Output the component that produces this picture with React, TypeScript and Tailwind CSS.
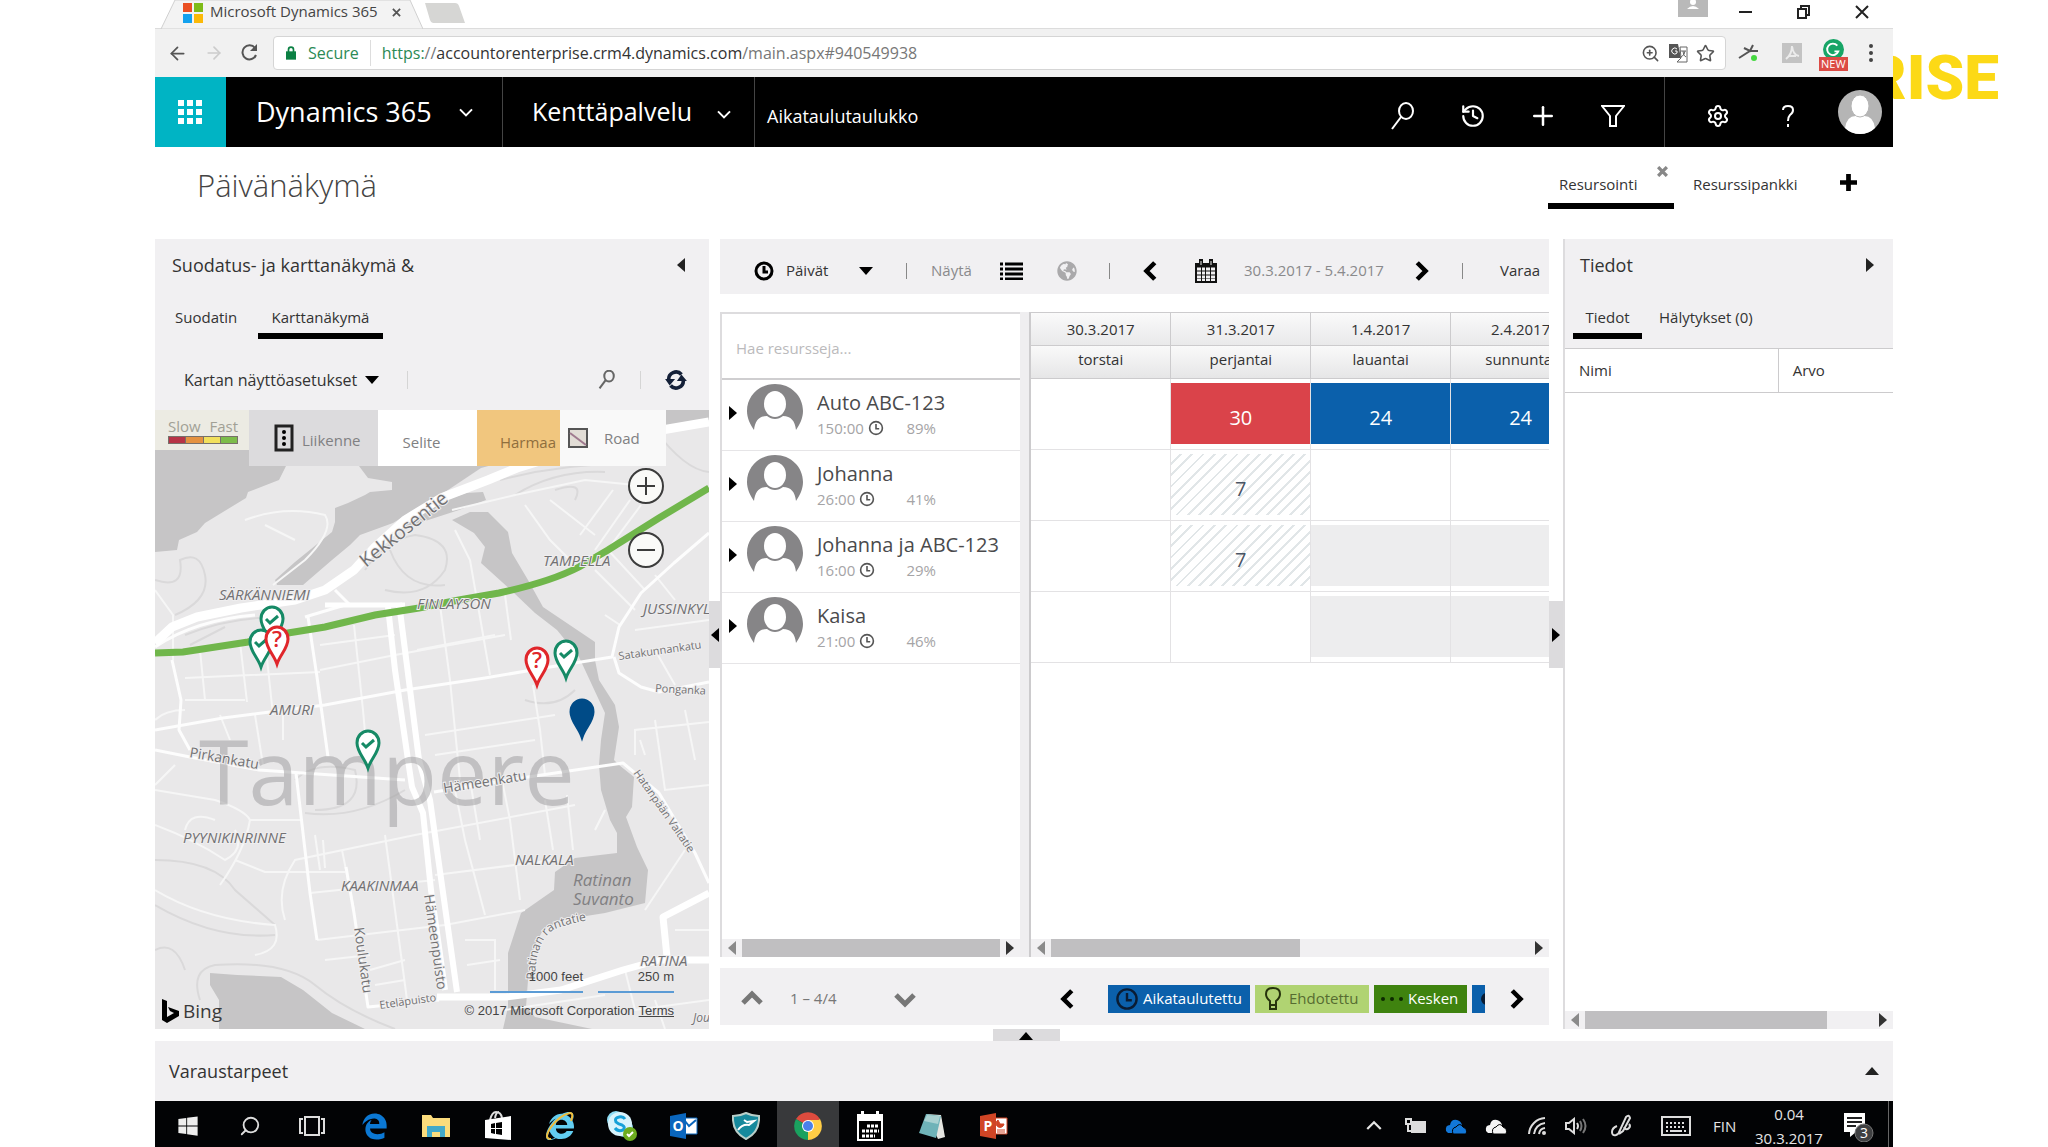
import React from 'react';
import { ArrowLeft, ArrowRight, History, Plus, Search, Settings, Star, ZoomIn } from 'lucide-react';
import { FaEdgeLegacy, FaGlobeAmericas, FaInternetExplorer, FaWindows } from 'react-icons/fa';

type IconProps = { className?: string };
type Direction = 'left' | 'right' | 'up' | 'down';

const resources = [
  { name: 'Auto ABC-123', hours: '150:00', load: '89%' },
  { name: 'Johanna', hours: '26:00', load: '41%' },
  { name: 'Johanna ja ABC-123', hours: '16:00', load: '29%' },
  { name: 'Kaisa', hours: '21:00', load: '46%' },
];

const days = [
  { date: '30.3.2017', name: 'torstai' },
  { date: '31.3.2017', name: 'perjantai' },
  { date: '1.4.2017', name: 'lauantai' },
  { date: '2.4.2017', name: 'sunnuntai' },
];

const cellStyles: Record<string, string> = {
  none: '',
  over: 'bg-[#da434a] text-white',
  full: 'bg-[#0b60ab] text-white',
  part: 'text-gray-600 bg-[repeating-linear-gradient(135deg,#ffffff_0px,#ffffff_6px,#e1e6e8_6px,#e1e6e8_8px)]',
  off: 'bg-[#ededee]',
};

const schedule = [
  [{ kind: 'none', value: '' }, { kind: 'over', value: '30' }, { kind: 'full', value: '24' }, { kind: 'full', value: '24' }],
  [{ kind: 'none', value: '' }, { kind: 'part', value: '7' }, { kind: 'none', value: '' }, { kind: 'none', value: '' }],
  [{ kind: 'none', value: '' }, { kind: 'part', value: '7' }, { kind: 'off', value: '' }, { kind: 'off', value: '' }],
  [{ kind: 'none', value: '' }, { kind: 'none', value: '' }, { kind: 'off', value: '' }, { kind: 'off', value: '' }],
];

const Triangle = ({ dir, className = '' }: IconProps & { dir: Direction }) => {
  const points = {
    left: '9,0 9,14 1,7',
    right: '1,0 1,14 9,7',
    up: '0,9 14,9 7,1',
    down: '0,1 14,1 7,9',
  };
  const wide = dir === 'up' || dir === 'down';
  return (
    <svg
      viewBox={wide ? '0 0 14 10' : '0 0 10 14'}
      className={`${wide ? 'w-[14px] h-[10px]' : 'w-[10px] h-[14px]'} shrink-0 ${className}`}
      fill="currentColor"
    >
      <polygon points={points[dir]} />
    </svg>
  );
};

const Chevron = ({ dir, className = '', width = 5 }: IconProps & { dir: Direction; width?: number }) => {
  const d = {
    left: 'M15 3 L6 12 L15 21',
    right: 'M9 3 L18 12 L9 21',
    up: 'M3 16 L12 7 L21 16',
    down: 'M3 8 L12 17 L21 8',
  };
  return (
    <svg viewBox="0 0 24 24" className={`shrink-0 ${className}`} fill="none" stroke="currentColor" strokeWidth={width}>
      <path d={d[dir]} />
    </svg>
  );
};

const Magnifier = ({ className = '', width = 2 }: IconProps & { width?: number }) => (
  <svg viewBox="0 0 24 28" className={`shrink-0 ${className}`} fill="none" stroke="currentColor" strokeWidth={width}>
    <ellipse cx="15" cy="9" rx="7" ry="8" />
    <path d="M10 15 L1 27" />
  </svg>
);

const ClockIcon = ({ className = '', width = 2 }: IconProps & { width?: number }) => (
  <svg viewBox="0 0 20 20" className={`shrink-0 ${className}`} fill="none" stroke="currentColor" strokeWidth={width}>
    <circle cx="10" cy="10" r="8" />
    <path d="M10 5 V11 H14" />
  </svg>
);

const PersonIcon = ({ className = '' }: IconProps) => (
  <svg viewBox="0 0 56 46" className={`shrink-0 ${className}`}>
    <path
      d="M28 0 C12 0 0 12 0 27 C0 34 3 40 7 46 C8 37 12 32 20 32 C25 36 31 36 36 32 C44 32 48 37 49 46 C53 40 56 34 56 27 C56 12 44 0 28 0 Z"
      fill="#868587"
    />
    <ellipse cx="28" cy="20" rx="11" ry="13" fill="#fff" />
  </svg>
);

const CalendarIcon = ({ className = '' }: IconProps) => (
  <svg viewBox="0 0 22 24" className={`shrink-0 ${className}`}>
    <path d="M0 4 H22 V24 H0 Z" fill="#111" />
    <path d="M4 0 H8 V7 H4 Z M14 0 H18 V7 H14 Z" fill="#111" />
    <path d="M6 2 V6 M16 2 V6" stroke="#eee" strokeWidth="1" />
    {[10, 14, 18, 21].map((y, i) => (
      <path key={y} d={`M2 ${y} h4 m1 0 h3 m1 0 h4 m1 0 h4`} stroke="#f1f0f2" strokeWidth={i === 3 ? 2 : 3} />
    ))}
  </svg>
);

const BrowserChrome = () => (
  <div>
    <div className="h-[29px] flex items-start border-b border-[#dcdcdc]">
      <div className="relative w-[268px] h-[29px] flex items-center pl-7 pb-1">
        <svg viewBox="0 0 268 30" preserveAspectRatio="none" className="absolute inset-0 w-full h-full">
          <path d="M6 30 L20 0 H255 L268 30 Z" fill="#f3f3f3" stroke="#cfcfcf" />
        </svg>
        <svg viewBox="0 0 20 20" className="relative w-5 h-5">
          <path d="M0 0 H9 V9 H0 Z" fill="#ea4f22" />
          <path d="M11 0 H20 V9 H11 Z" fill="#7ebb18" />
          <path d="M0 11 H9 V20 H0 Z" fill="#13a1ee" />
          <path d="M11 11 H20 V20 H11 Z" fill="#fbb908" />
        </svg>
        <span className="relative ml-[7px] pb-1 text-[15px] leading-5 text-[#444] whitespace-nowrap">Microsoft Dynamics 365</span>
        <button aria-label="Close tab" className="relative ml-auto mr-[22px] text-[#555]">
          <svg viewBox="0 0 10 10" className="w-[9px] h-[9px]" stroke="currentColor" strokeWidth="2">
            <path d="M1 1 L9 9 M9 1 L1 9" />
          </svg>
        </button>
      </div>
      <button aria-label="New tab" className="mt-[3px]">
        <svg viewBox="0 0 42 20" className="w-[42px] h-5">
          <path d="M2 0 H32 Q35 0 36 3 L42 20 H10 Q8 20 7 17 Z" fill="#d6d6d4" />
        </svg>
      </button>
      <div className="ml-auto flex items-start text-[#222]">
        <svg viewBox="0 0 30 17" className="w-[30px] h-[17px] mr-[31px]">
          <path d="M0 0 H30 V17 H0 Z" fill="#b9b9b9" />
          <circle cx="15" cy="2" r="3" fill="#fff" />
          <path d="M9 9 Q15 3 21 9 Z" fill="#fff" />
        </svg>
        <button aria-label="Minimize" className="w-[58px] h-6 flex items-center">
          <svg viewBox="0 0 14 14" className="w-[14px]" stroke="currentColor" strokeWidth="2"><path d="M0 7 H13" /></svg>
        </button>
        <button aria-label="Restore" className="w-[58px] h-6 flex items-center">
          <svg viewBox="0 0 14 14" className="w-[14px]" fill="none" stroke="currentColor" strokeWidth="2">
            <path d="M1 4 H9 V13 H1 Z M4 4 V1 H12 V10 H9" />
          </svg>
        </button>
        <button aria-label="Close" className="w-[38px] h-6 flex items-center">
          <svg viewBox="0 0 14 14" className="w-[14px]" stroke="currentColor" strokeWidth="2"><path d="M1 1 L13 13 M13 1 L1 13" /></svg>
        </button>
      </div>
    </div>
    <div className="h-12 bg-[#f1f1f1] flex items-center pl-3">
      <button aria-label="Back"><ArrowLeft className="w-[21px] h-[21px] text-[#555]" /></button>
      <button aria-label="Forward" className="ml-4"><ArrowRight className="w-5 h-5 text-[#ccc]" /></button>
      <button aria-label="Reload" className="ml-[15px]">
        <svg viewBox="0 0 20 20" className="w-5 h-5 text-[#555]" fill="none" stroke="currentColor" strokeWidth="2">
          <path d="M16 5 A7 7 0 1 0 17 12" />
          <path d="M18 1 V8 H11 Z" fill="currentColor" stroke="none" />
        </svg>
      </button>
      <div className="ml-[14px] flex-1 h-[34px] bg-white border border-[#d5d5d5] rounded-sm flex items-center pl-3 pr-[10px] text-[#555]">
        <svg viewBox="0 0 12 16" className="w-[10px] h-[14px]">
          <path d="M3 7 V4 A3 3 0 0 1 9 4 V7" fill="none" stroke="#0b8043" strokeWidth="2" />
          <path d="M0 6 H12 V16 H0 Z" fill="#0b8043" />
        </svg>
        <span className="ml-3 text-base leading-5 text-[#2b8a55]">Secure</span>
        <span className="mx-[11px] w-px h-[26px] bg-[#ddd]" />
        <div className="text-base leading-5 whitespace-nowrap text-[#777]">
          <span className="text-[#2b8a55]">https:</span>//<span className="text-[#333]">accountorenterprise.crm4.dynamics.com</span>/main.aspx#940549938
        </div>
        <div className="ml-auto flex items-center gap-2">
          <ZoomIn className="w-[19px] h-[19px]" />
          <svg viewBox="0 0 20 20" className="w-5 h-5">
            <path d="M1 1 H10 L13 15 H1 Z" fill="#555" />
            <path d="M12 4 H19 V19 H9 L13 15 Z" fill="#fff" stroke="#666" />
            <path d="M9 6 A3 3 0 1 0 9 10 V8 H7" fill="none" stroke="#fff" strokeWidth="1" />
            <path d="M13 8 H18 M15 8 Q15 13 18 14 M17 8 Q17 12 13 14" fill="none" stroke="#666" />
          </svg>
          <Star className="w-[19px] h-[19px]" />
        </div>
      </div>
      <div className="w-[167px] flex items-center justify-between pl-3 pr-4">
        <svg viewBox="0 0 22 20" className="w-[22px] h-5" fill="none" stroke="#555" strokeWidth="2">
          <path d="M1 15 L12 8 L20 8 M6 5 L12 8 L15 2" />
          <circle cx="16" cy="15" r="3" fill="#45d840" stroke="none" />
        </svg>
        <svg viewBox="0 0 20 20" className="w-5 h-5">
          <path d="M0 0 H20 V20 H0 Z" fill="#c3c3c3" />
          <path d="M4 16 Q10 11 10 3 Q11 12 17 13 M7 13 H14" fill="none" stroke="#ececec" strokeWidth="2" />
        </svg>
        <span className="relative w-7 h-[28px] -ml-1 flex flex-col items-center">
          <svg viewBox="0 0 22 22" className="w-[21px] h-[21px]">
            <circle cx="11" cy="11" r="11" fill="#17a566" />
            <path d="M15 7 A6 6 0 1 0 16 13 H12" fill="none" stroke="#fff" strokeWidth="2" />
          </svg>
          <span className="absolute -bottom-1 bg-[#dc4b45] text-white text-[11px] leading-[14px] px-[2px]">NEW</span>
        </span>
        <button aria-label="Menu">
          <svg viewBox="0 0 4 20" className="w-1 h-5 mr-1" fill="#444">
            <circle cx="2" cy="3" r="2" /><circle cx="2" cy="10" r="2" /><circle cx="2" cy="17" r="2" />
          </svg>
        </button>
      </div>
    </div>
  </div>
);

const NavBar = () => (
  <header className="h-[70px] bg-black text-white flex items-stretch">
    <button aria-label="Apps" className="w-[71px] bg-[#00b4c4] flex items-center justify-center pr-[2px]">
      <svg viewBox="0 0 24 24" className="w-6 h-6" fill="#fff">
        {[0, 9, 18].map((y) => [0, 9, 18].map((x) => <rect key={`${x}-${y}`} x={x} y={y} width="6" height="6" />))}
      </svg>
    </button>
    <button className="w-[277px] border-r border-[#444] flex items-center pl-[30px] text-[27px]">
      Dynamics 365
      <Chevron dir="down" width={3} className="w-4 h-4 ml-auto mr-7" />
    </button>
    <button className="w-[252px] border-r border-[#444] flex items-center pl-[29px] text-[25px]">
      Kenttäpalvelu
      <Chevron dir="down" width={3} className="w-4 h-4 ml-auto mr-[22px] mt-1" />
    </button>
    <span className="ml-3 mt-2 self-center text-lg">Aikataulutaulukko</span>
    <div className="ml-auto flex items-center pt-2">
      <button aria-label="Search" className="w-[70px] flex justify-center"><Magnifier className="w-6 h-7" /></button>
      <button aria-label="Recent" className="w-[70px] flex justify-center"><History strokeWidth={2} className="w-[26px] h-[26px]" /></button>
      <button aria-label="New" className="w-[70px] flex justify-center"><Plus strokeWidth={2} className="w-[30px] h-[30px]" /></button>
      <button aria-label="Filter" className="w-[70px] flex justify-center">
        <svg viewBox="0 0 24 24" className="w-6 h-6" fill="none" stroke="currentColor" strokeWidth="2">
          <path d="M1 2 H23 L15 12 V22 H9 V12 Z" />
        </svg>
      </button>
    </div>
    <div className="ml-4 border-l border-[#444] flex items-center pl-[18px] pr-[10px]">
      <button aria-label="Settings" className="w-[70px] flex justify-center pt-2"><Settings strokeWidth={2} className="w-6 h-6" /></button>
      <button aria-label="Help" className="w-[70px] flex justify-center pt-2">
        <svg viewBox="0 0 14 24" className="w-[14px] h-6" fill="none" stroke="currentColor" strokeWidth="2">
          <path d="M2 6 Q2 2 7 2 Q12 2 12 6 Q12 9 9 11 Q7 13 7 17 M7 20 V23" />
        </svg>
      </button>
      <button aria-label="Account" className="w-[52px] flex justify-end ml-2">
        <svg viewBox="0 0 46 46" className="w-[46px] h-[46px]">
          <circle cx="23" cy="23" r="22" fill="#b5b5b5" />
          <path d="M8 39 Q10 26 20 27 H26 Q36 26 38 39 Q32 45 23 45 Q14 45 8 39 Z" fill="#fff" />
          <ellipse cx="23" cy="17" rx="9" ry="11" fill="#fff" stroke="#b5b5b5" />
        </svg>
      </button>
    </div>
  </header>
);

const PageHeader = () => (
  <div className="h-[92px] flex items-center justify-between pl-[42px] pr-9 pb-1">
    <h1 className="text-[31px] leading-10 font-light text-[#444] pb-3">Päivänäkymä</h1>
    <nav className="flex items-start text-[15px] leading-5 text-[#333]">
      <button className="relative w-[126px] h-[35px] pl-[11px] border-b-[6px] border-black text-left pb-2">
        Resursointi
        <svg viewBox="0 0 10 10" className="absolute -top-2 right-[6px] w-[11px] h-[11px]" stroke="#888" strokeWidth="3">
          <path d="M1 1 L9 9 M9 1 L1 9" />
        </svg>
      </button>
      <button className="ml-[19px] w-[110px] text-left">Resurssipankki</button>
      <button aria-label="Add board" className="ml-[37px]">
        <svg viewBox="0 0 18 18" className="w-[17px] h-[17px]" stroke="#000" strokeWidth="5"><path d="M9 0 V18 M0 9 H18" /></svg>
      </button>
    </nav>
  </div>
);

type PinKind = 'done' | 'open' | 'here';
const pinColors: Record<PinKind, string> = { done: '#168a66', open: '#e0262b', here: '#004b87' };

const Pin = ({ x, y, kind }: { x: number; y: number; kind: PinKind }) => (
  <g transform={`translate(${x} ${y})`}>
    <path
      d="M0 -2 C-3 -11 -11 -18 -11 -27 C-11 -34 -6 -39 0 -39 C6 -39 11 -34 11 -27 C11 -18 3 -11 0 -2 Z"
      fill={kind === 'here' ? '#004b87' : '#fff'}
      stroke={pinColors[kind]}
      strokeWidth="3"
    />
    {kind === 'done' && <path d="M-6 -27 L-2 -23 L6 -30" fill="none" stroke={pinColors.done} strokeWidth="3" />}
    {kind === 'open' && (
      <text y="-19" textAnchor="middle" fontSize="22" fontWeight="600" fill={pinColors.open}>?</text>
    )}
  </g>
);

const MapDrawing = () => (
  <svg viewBox="0 0 554 619" preserveAspectRatio="xMidYMid slice" className="absolute inset-0 w-full h-full">
    <path d="M0 0 H554 V619 H0 Z" fill="#e9e8e9" />
    {/* water */}
    <g fill="#c6c5c6">
      <path d="M0 0 H480 L400 38 L326 58 L293 80 L264 97 L238 113 L205 125 L195 135 L177 150 L148 175 L122 175 L120 170 L140 152 L177 122 L180 112 L180 98 L193 93 L210 85 L215 82 L237 80 L237 72 L213 68 L204 56 H131 L124 70 L93 82 L91 88 L68 102 L50 113 L42 122 L24 130 L22 140 L0 142 Z" />
      <path d="M328 82 L331 90 L304 100 L264 113 L246 117 L271 97 L311 83 Z" />
      <path d="M511 0 H554 V10 L511 16 Z" />
      <path d="M297 110 L315 102 L333 102 L353 122 L357 143 L373 170 L388 197 L440 232 L440 250 L444 270 L460 295 L464 317 L459 350 L464 355 L479 367 L477 397 L471 407 L482 437 L493 460 L490 493 L450 503 L406 510 L388 520 L379 537 L373 570 L371 597 L380 607 L437 619 H348 L353 597 V543 L366 503 L399 480 L400 462 L420 448 L462 443 V423 L455 410 L446 380 L444 355 L446 330 L450 303 L424 247 L402 220 L380 203 L359 183 L326 153 L330 137 L319 123 Z" />
      <path d="M55 563 L82 565 L126 567 L148 580 L177 603 L210 619 H64 V590 L55 575 Z" />
    </g>
    {/* park paths and terrain */}
    <g fill="none" stroke="#dad9da" strokeWidth="2">
      <path d="M0 170 Q30 180 25 150 Q45 140 50 165 Q55 190 20 205 M30 225 Q80 205 130 208 M35 235 L70 217" />
      <path d="M0 450 Q60 450 80 480 L120 515 M0 495 Q60 530 120 525 M0 540 Q20 530 30 560 M45 590 Q35 560 60 555 Q130 550 160 575 Q190 600 240 619" />
      <path d="M210 160 Q230 130 260 125 Q300 130 290 160 Q270 190 230 180 M235 140 Q250 180 290 175 M400 80 Q430 70 420 90 M140 370 Q160 350 200 360 Q210 400 160 400 M250 380 Q200 410 150 403" />
      <path d="M345 70 Q420 50 500 55 M360 85 Q400 60 450 62 M500 20 Q530 60 554 62 M370 290 Q400 300 420 280 M400 40 Q430 20 480 40" />
    </g>
    {/* side streets */}
    <g fill="none" stroke="#f6f6f6" strokeWidth="2">
      <path d="M90 110 Q130 95 170 105 Q180 120 150 150 L118 175 M110 115 L140 130 M0 180 L18 205 V250 M300 120 L315 150 L322 190" />
      <path d="M297 100 L360 85 L430 70 L480 75 M370 95 L395 130 L420 155 M395 90 L440 125 M458 80 L425 125 M475 90 L440 140 M486 95 L445 150 M453 140 L490 180" />
      <path d="M440 160 L480 200 M500 165 L520 190 M450 205 L465 215 M480 220 L554 210 M500 240 L520 275" />
      <path d="M45 240 L50 290 M85 232 L92 292 M110 230 L118 305 M165 260 L240 245 L350 225 M199 215 L208 300 L212 345 M285 195 L295 270 L305 370 M322 190 L335 265 M350 185 L356 230" />
      <path d="M30 268 L165 262 M30 290 H90 M165 235 L240 225 M262 240 L340 225 M378 275 L385 320 L390 365 M270 325 L400 305 M280 345 L380 330" />
      <path d="M0 310 Q10 300 30 300 M65 305 L75 330 M100 305 L108 355 M128 300 V330 M0 375 L20 355 M0 380 L60 390 Q90 400 95 410 L145 410 M30 420 Q35 400 60 410 M0 415 Q40 430 70 450 Q90 440 80 420" />
      <path d="M80 450 L110 462 H190 M65 475 Q90 440 95 410 M0 480 Q50 510 120 515 Q128 540 100 545 M130 510 Q120 480 140 450 L260 425 L420 395 M155 483 L280 470 M165 460 L160 425 M170 458 L168 430" />
      <path d="M187 440 L192 465 L199 500 M230 425 L240 500 L252 590 M280 465 L400 450 M300 380 L310 430 L330 505 M315 370 L325 430 M345 360 L355 410 L365 490 M390 390 L398 440 M412 385 L418 440" />
      <path d="M162 530 L290 515 L370 500 M170 550 L215 545 M215 560 L250 550 M310 530 H340 V580 M312 555 L345 550 M220 575 L250 570 M480 345 V320 L554 312 M485 330 L490 345 M500 310 L510 380 L554 375 M530 300 L540 350" />
      <path d="M450 400 L440 420 M490 500 L530 440 M520 520 H554 M470 560 L480 600 L554 590 M500 590 L510 619 M350 600 L450 585" />
    </g>
    {/* main streets */}
    <g fill="none" stroke="#fdfdfd" strokeWidth="3" strokeLinejoin="round">
      <path d="M0 320 L68 308 L170 295 L250 280 L330 268 L395 257 L457 247 L464 217 L486 183 L519 153 L554 123" />
      <path d="M459 247 L464 263 L486 277 L504 282 L554 272" />
      <path d="M0 340 L35 347 L104 360 L250 370 M279 382 L373 367 L468 353 L504 383 L540 443 L554 473" />
      <path d="M17 250 L26 290 L24 320 L35 340 M153 207 L162 267 L173 347 M141 363 L155 483 L162 530" />
      <path d="M191 457 L199 503 L213 597 L284 590 M150 207 L190 195 M180 180 L195 195" />
      <path d="M0 237 Q40 210 100 205" />
    </g>
    <g fill="none" stroke="#fff" strokeLinejoin="round">
      <path d="M233 197 L240 260 L253 350 L257 377 L268 403 L276 480 L290 580 M244 193 L264 350 L275 390 L283 447 L302 582" strokeWidth="6" />
      <path d="M0 233 L17 217 L42 207 L86 198 L140 190 L170 180 L199 160 L220 137 L250 110 L286 88 L333 70 L362 58 L460 28 L554 12" strokeWidth="9" />
      <path d="M170 195 L250 195" strokeWidth="5" />
      <path d="M282 587 L351 587 L406 580 L468 560 L504 550 L554 550 M554 483 L508 507 L512 547" strokeWidth="7" />
    </g>
    <path
      d="M0 243 L28 242 L93 232 L133 223 L170 217 L220 205 L264 198 L304 190 L344 183 Q395 172 424 157 L453 140 L504 108 L554 78"
      fill="none"
      stroke="#70b64b"
      strokeWidth="7"
    />
    <text x="44" y="395" fontSize="90" fontWeight="500" fill="#9b9a9c" opacity="0.5">Tampere</text>
    <g fill="#727173" fontSize="15" fontStyle="italic" stroke="#efeeef" strokeWidth="2" paintOrder="stroke">
      <text x="64" y="190">SÄRKÄNNIEMI</text>
      <text x="115" y="305">AMURI</text>
      <text x="388" y="156">TAMPELLA</text>
      <text x="262" y="199">FINLAYSON</text>
      <text x="488" y="204">JUSSINKYL</text>
      <text x="28" y="433">PYYNIKINRINNE</text>
      <text x="360" y="455">NALKALA</text>
      <text x="186" y="481">KAAKINMAA</text>
      <text x="485" y="556">RATINA</text>
      <text x="538" y="612" fontSize="12">Jou</text>
    </g>
    <g fill="#818082" fontSize="17" fontStyle="italic">
      <text x="418" y="476">Ratinan</text>
      <text x="418" y="495">Suvanto</text>
    </g>
    <g fill="#727173" fontSize="14" stroke="#efeeef" strokeWidth="2" paintOrder="stroke">
      <text transform="translate(211 158) rotate(-39)" fontSize="19">Kekkosentie</text>
      <text transform="translate(34 347) rotate(10)">Pirkankatu</text>
      <text transform="translate(289 383) rotate(-9)">Hämeenkatu</text>
      <text transform="translate(464 250) rotate(-8)" fontSize="11">Satakunnankatu</text>
      <text transform="translate(500 282) rotate(3)" fontSize="11">Ponganka</text>
      <text transform="translate(478 363) rotate(55)" fontSize="11">Hatanpään Valtatie</text>
      <text transform="translate(199 518) rotate(82)">Koulukatu</text>
      <text transform="translate(269 485) rotate(82)">Hämeenpuisto</text>
      <text transform="translate(225 599) rotate(-8)" fontSize="11">Eteläpuisto</text>
      <path id="rantatie" d="M380 570 Q380 530 400 519 Q420 511 450 508" fill="none" stroke="none" />
      <text fontSize="12"><textPath href="#rantatie">Ratinan rantatie</textPath></text>
    </g>
    <Pin x={117} y={236} kind="done" />
    <Pin x={106} y={259} kind="done" />
    <Pin x={122} y={256} kind="open" />
    <Pin x={382} y={277} kind="open" />
    <Pin x={411} y={270} kind="done" />
    <Pin x={427} y={329} kind="here" />
    <Pin x={213} y={360} kind="done" />
  </svg>
);

const RefreshIcon = ({ className = '' }: IconProps) => (
  <svg viewBox="0 0 24 22" className={className} fill="none" stroke="currentColor" strokeWidth="4">
    <path d="M18 5 A8 8 0 0 0 4 11" />
    <path d="M6 17 A8 8 0 0 0 20 11" />
    <path d="M0 10 H11 L5 17 Z M13 12 H24 L18 5 Z" fill="currentColor" stroke="none" />
  </svg>
);

const MapPanel = () => (
  <section className="bg-[#f1f0f2] flex flex-col min-w-0">
    <div className="h-[52px] flex items-center justify-between pl-[17px] pr-[23px]">
      <h2 className="text-lg text-[#333]">Suodatus- ja karttanäkymä &amp;</h2>
      <button aria-label="Collapse"><Triangle dir="left" className="text-[#222]" /></button>
    </div>
    <div className="flex items-start h-[68px] pt-4 text-[15px] leading-5 text-[#333]">
      <button className="ml-5 w-[66px] text-left">Suodatin</button>
      <button className="ml-[17px] w-[125px] h-8 text-center border-b-[6px] border-black pb-[6px]">Karttanäkymä</button>
    </div>
    <div className="h-[51px] flex items-center pl-[29px] pr-[22px] pb-[10px] text-[#333]">
      <button className="flex items-center gap-2 text-base">
        Kartan näyttöasetukset
        <Triangle dir="down" className="text-black" />
      </button>
      <span className="ml-7 w-px h-[18px] bg-[#d5d5d5]" />
      <button aria-label="Search map" className="ml-auto"><Magnifier width={3} className="w-[18px] h-[19px] text-[#666]" /></button>
      <span className="ml-6 w-px h-[18px] bg-[#d5d5d5]" />
      <button aria-label="Refresh" className="ml-6"><RefreshIcon className="w-[22px] h-5 text-[#142038]" /></button>
    </div>
    <div className="relative flex-1 overflow-hidden min-h-[560px]">
      <MapDrawing />
      <div className="relative flex items-start text-[15px] leading-5 text-[#808082]">
        <div className="w-[94px] h-10 bg-[#ecebe3] pt-[6px] pl-[13px] text-[#a1a095]">
          <div className="w-[70px] flex justify-between"><span>Slow</span><span>Fast</span></div>
          <div className="flex w-[70px] h-2 border border-[#77706a] divide-x divide-[#77706a]">
            <span className="flex-1 bg-[#b73346]" />
            <span className="flex-1 bg-[#e59240]" />
            <span className="flex-1 bg-[#f2e05c]" />
            <span className="flex-1 bg-[#7cbc4a]" />
          </div>
        </div>
        <button className="w-[129px] h-14 bg-[#dcdbdd] flex items-center pl-[25px] gap-2">
          <svg viewBox="0 0 20 28" className="w-5 h-7">
            <path d="M2 2 H18 V26 H2 Z" fill="#dcdbdd" stroke="#222" strokeWidth="3" />
            <circle cx="10" cy="8" r="2" /><circle cx="10" cy="14" r="2" /><circle cx="10" cy="20" r="2" />
          </svg>
          <span className="pt-1">Liikenne</span>
        </button>
        <button className="w-[99px] h-14 bg-white flex items-center justify-center pt-2 pr-3">Selite</button>
        <button className="w-[83px] h-14 bg-[#f1c67e] flex items-center justify-end pt-2 pr-1 text-[#8f6e3d]">Harmaa</button>
        <button className="w-[106px] h-14 bg-[#f9f9f9] flex items-center pl-2 gap-4">
          <svg viewBox="0 0 20 20" className="w-5 h-5">
            <path d="M1 1 H19 V19 H1 Z" fill="#e2ddd6" stroke="#555" strokeWidth="2" />
            <path d="M2 5 L18 17" stroke="#a07a8f" strokeWidth="2" />
          </svg>
          Road
        </button>
      </div>
      <div className="absolute top-[58px] right-[45px] flex flex-col gap-7">
        {['Zoom in', 'Zoom out'].map((label) => (
          <button key={label} aria-label={label}>
            <svg viewBox="0 0 36 36" className="w-9 h-9" fill="none" stroke="#3c3c3c" strokeWidth="2">
              <circle cx="18" cy="18" r="17" fill="#fafaf8" />
              <path d="M9 18 H27" />
              {label === 'Zoom in' && <path d="M18 9 V27" />}
            </svg>
          </button>
        ))}
      </div>
      <div className="absolute bottom-1 left-[7px] flex items-center gap-1 text-[19px] text-[#3a3a3a]">
        <svg viewBox="0 0 17 24" className="w-[17px] h-6" fill="#000">
          <path d="M0 0 L5 2 V18 L12 14 L8 12 L6 8 L17 12 V17 L5 24 L0 21 Z" />
        </svg>
        Bing
      </div>
      <div className="absolute bottom-2 right-[35px] flex flex-col items-end text-[13px] leading-5 text-[#444] [font-family:'Liberation_Sans',Arial,sans-serif]">
        <div className="flex gap-[15px] mb-2">
          <span className="w-[93px] text-right border-b-2 border-[#5b9bd5] pb-1">1000 feet</span>
          <span className="w-[76px] text-right border-b-2 border-[#5b9bd5] pb-1">250 m</span>
        </div>
        <p className="flex gap-1">© 2017 Microsoft Corporation <a href="#terms" className="underline">Terms</a></p>
      </div>
    </div>
  </section>
);

const Scrollbar = ({ thumb }: { thumb: string }) => (
  <div className="h-[18px] bg-[#f1f0f2] flex items-center px-[5px] gap-[5px]">
    <Triangle dir="left" className="text-[#8a8a8a]" />
    <div className="flex-1 h-full"><div className={`h-full bg-[#c0bfc1] ${thumb}`} /></div>
    <Triangle dir="right" className="text-[#333]" />
  </div>
);

const BoardToolbar = () => (
  <div className="h-[55px] shrink-0 bg-[#f1f0f2] flex items-center pt-2 pl-[34px] text-[15px] text-[#333] whitespace-nowrap overflow-hidden">
    <button className="w-[84px] flex items-center gap-3">
      <ClockIcon width={3} className="w-5 h-5 text-black" />
      Päivät
    </button>
    <button aria-label="Choose view" className="ml-[21px]"><Triangle dir="down" className="text-black" /></button>
    <span className="ml-[33px] w-px h-4 bg-[#888]" />
    <span className="ml-6 w-[46px] text-[#8a8a8c]">Näytä</span>
    <button aria-label="List" className="ml-[23px]">
      <svg viewBox="0 0 23 18" className="w-[23px] h-[18px]" stroke="#000" strokeWidth="3">
        <path d="M0 2 H3 M5 2 H23 M0 7 H3 M5 7 H23 M0 12 H3 M5 12 H23 M0 17 H3 M5 17 H23" />
      </svg>
    </button>
    <button aria-label="Map" className="ml-[34px]"><FaGlobeAmericas className="w-5 h-5 text-[#aaa9ab]" /></button>
    <span className="ml-8 w-px h-4 bg-[#888]" />
    <button aria-label="Previous" className="ml-[31px]"><Chevron dir="left" className="w-[22px] h-[22px] text-black" /></button>
    <button aria-label="Calendar" className="ml-8"><CalendarIcon className="w-[22px] h-6" /></button>
    <span className="ml-[26px] w-[142px] text-center text-[#8a8a8c]">30.3.2017 - 5.4.2017</span>
    <button aria-label="Next" className="ml-6"><Chevron dir="right" className="w-[22px] h-[22px] text-black" /></button>
    <span className="ml-[31px] w-px h-4 bg-[#888]" />
    <button className="ml-[37px]">Varaa</button>
  </div>
);

const ResourceList = () => (
  <div className="w-[300px] shrink-0 flex flex-col border-l-2 border-t-2 border-[#dddcde]">
    <label htmlFor="resource-search" className="sr-only">Hae resursseja</label>
    <input
      id="resource-search"
      type="text"
      placeholder="Hae resursseja..."
      className="h-[66px] w-full border-b-2 border-[#cfced0] pl-[14px] pt-1 text-[15px] placeholder:text-[#bbbabc] outline-none"
    />
    <ul>
      {resources.map((r) => (
        <li key={r.name} className="h-[71px] flex items-start border-b border-[#e6e5e7] pl-[6px]">
          <button aria-label={`Expand ${r.name}`} className="mt-[26px] flex"><Triangle dir="right" className="text-black" /></button>
          <PersonIcon className="w-14 h-[46px] ml-[9px] mt-[4px]" />
          <div className="ml-[14px] pt-2">
            <p className="text-[20px] leading-[30px] text-[#4a4a4c] whitespace-nowrap">{r.name}</p>
            <p className="flex items-center w-[119px] text-[15px] leading-5 text-[#a5a4a6]">
              {r.hours}
              <ClockIcon className="w-4 h-4 ml-1 text-[#555]" />
              <span className="ml-auto">{r.load}</span>
            </p>
          </div>
        </li>
      ))}
    </ul>
    <div className="mt-auto"><Scrollbar thumb="w-full" /></div>
  </div>
);

const Timeline = () => (
  <div className="flex-1 min-w-0 flex flex-col border-l-2 border-t border-[#cccbcd] overflow-hidden">
    <table className="table-fixed w-[560px] border-collapse text-center">
      <thead className="text-[15px] text-[#333]">
        <tr className="h-8 bg-gradient-to-b from-[#fafafa] to-[#e9e9ea]">
          {days.map((d) => <th key={d.date} className="border-r border-b border-[#cccbcd] font-normal">{d.date}</th>)}
        </tr>
        <tr className="h-[33px] bg-gradient-to-b from-[#fafafa] to-[#e6e6e7]">
          {days.map((d) => <th key={d.name} className="border-r border-b border-[#cccbcd] font-normal pb-1">{d.name}</th>)}
        </tr>
      </thead>
      <tbody className="text-[20px]">
        {schedule.map((row, i) => (
          <tr key={resources[i].name} className="h-[71px]">
            {row.map((cell, j) => (
              <td key={days[j].date} className="border-r border-b border-[#e3e2e4] p-0">
                <div className={`h-[61px] flex items-center justify-center pt-2 ${cellStyles[cell.kind]}`}>{cell.value}</div>
              </td>
            ))}
          </tr>
        ))}
      </tbody>
    </table>
    <div className="mt-auto"><Scrollbar thumb="w-[52%]" /></div>
  </div>
);

const BoardFooter = () => (
  <div className="mt-[11px] h-[57px] shrink-0 bg-[#f1f0f2] flex items-center pt-1 pl-5 pr-[23px] text-[15px] text-[#777]">
    <button aria-label="Previous page"><Chevron dir="up" className="w-6 h-6" /></button>
    <span className="ml-[26px] w-[52px] whitespace-nowrap">1 – 4/4</span>
    <button aria-label="Next page" className="ml-[51px]"><Chevron dir="down" className="w-6 h-6" /></button>
    <button aria-label="Scroll legend left" className="ml-auto text-black"><Chevron dir="left" className="w-[22px] h-[22px]" /></button>
    <div className="ml-7 w-[377px] flex gap-[5px] overflow-hidden whitespace-nowrap">
      <span className="w-[142px] shrink-0 h-7 bg-[#0b60ab] text-white flex items-center gap-1 pl-[7px]">
        <ClockIcon className="w-6 h-6 text-[#0a1c33]" />Aikataulutettu
      </span>
      <span className="w-[114px] shrink-0 h-7 bg-[#b0d372] text-[#566c31] flex items-center gap-2 pl-[10px]">
        <svg viewBox="0 0 16 24" className="w-4 h-6" fill="none" stroke="#26330c" strokeWidth="2">
          <path d="M5 17 V14 Q1 11 1 7 Q1 1 8 1 Q15 1 15 7 Q15 11 11 14 V17 M5 18 H11 V22 H5 Z" />
        </svg>
        Ehdotettu
      </span>
      <span className="w-[93px] shrink-0 h-7 bg-[#3f830f] text-white flex items-center gap-1 pl-[6px]">
        <svg viewBox="0 0 24 6" className="w-6 h-[6px]" fill="#0d2a00">
          <circle cx="3" cy="3" r="2" /><circle cx="12" cy="3" r="2" /><circle cx="21" cy="3" r="2" />
        </svg>
        Kesken
      </span>
      <span className="w-[30px] shrink-0 h-7 bg-[#0b60ab] flex items-center pl-[9px]">
        <svg viewBox="0 0 12 12" className="w-3 h-3"><circle cx="6" cy="6" r="6" fill="#0a1c33" /></svg>
      </span>
    </div>
    <button aria-label="Scroll legend right" className="ml-[19px] text-black"><Chevron dir="right" className="w-[22px] h-[22px]" /></button>
  </div>
);

const DetailsPanel = () => (
  <section className="flex flex-col min-w-0 border-l-2 border-[#dddcde]">
    <div className="h-[109px] bg-[#f1f0f2]">
      <div className="h-[52px] flex items-center justify-between pl-[15px] pr-[18px]">
        <h2 className="text-lg text-[#333]">Tiedot</h2>
        <button aria-label="Collapse details"><Triangle dir="right" className="text-[#222]" /></button>
      </div>
      <div className="flex items-start pt-4 pl-2 text-[15px] leading-5 text-[#333]">
        <button className="w-[69px] h-8 border-b-[6px] border-black pb-[6px]">Tiedot</button>
        <button className="ml-[17px]">Hälytykset (0)</button>
      </div>
    </div>
    <table className="w-full table-fixed border-collapse text-[15px] text-[#333]">
      <thead>
        <tr className="h-11 border-y border-[#cccbcd]">
          <th className="w-[65%] pl-[14px] text-left font-normal border-r border-[#cccbcd]">Nimi</th>
          <th className="pl-[14px] text-left font-normal">Arvo</th>
        </tr>
      </thead>
    </table>
    <div className="mt-auto"><Scrollbar thumb="w-[84%]" /></div>
  </section>
);

const SideHandle = ({ dir }: { dir: 'left' | 'right' }) => (
  <div className="pt-[362px]">
    <button aria-label="Toggle panel" className="w-full h-[67px] bg-[#dcdbdd] flex items-center justify-center">
      <Triangle dir={dir} className="text-black" />
    </button>
  </div>
);

const OfficeIcon = ({ letter, color }: { letter: string; color: string }) => (
  <svg viewBox="0 0 28 28" className="w-7 h-7">
    <path d="M14 6 H27 V22 H14 Z" fill="#fff" stroke={color} />
    {letter === 'O' ? (
      <path d="M15 9 L19 14 L26 8" fill="none" stroke={color} strokeWidth="2" />
    ) : (
      <path d="M18 8 A4 4 0 1 0 24 12 H20 Z M17 18 H25 M17 20 H25" fill={color} stroke={color} />
    )}
    <path d="M0 4 L16 1 V27 L0 24 Z" fill={color} />
    <text x="8" y="19" textAnchor="middle" fontSize="14" fontWeight="700" fill="#fff">{letter}</text>
  </svg>
);

const OneDrive = ({ color }: { color: string }) => (
  <svg viewBox="0 0 22 18" className="w-[22px] h-[18px]">
    <path d="M1 14 Q0 8 5 8 Q6 2 12 3 Q16 4 17 8 L10 16 H3 Z" fill={color} />
    <path d="M8 17 Q6 11 11 10 Q15 5 18 10 Q23 12 21 17 Z" fill={color} stroke="#000" />
  </svg>
);

const taskbarApps: { name: string; icon: React.ReactNode }[] = [
  { name: 'Start', icon: <FaWindows className="w-[22px] h-[22px] text-[#eee]" /> },
  { name: 'Search', icon: <Search strokeWidth={2} className="w-[22px] h-[22px] -scale-x-100 text-[#ddd]" /> },
  {
    name: 'Task view',
    icon: (
      <svg viewBox="0 0 26 20" className="w-[26px] h-5" fill="none" stroke="#ddd" strokeWidth="2">
        <path d="M6 1 H20 V19 H6 Z M4 3 H1 V17 H4 M22 3 H25 V17 H22" />
      </svg>
    ),
  },
  { name: 'Edge', icon: <FaEdgeLegacy className="w-[27px] h-[27px] text-[#0b78d4]" /> },
  {
    name: 'File Explorer',
    icon: (
      <svg viewBox="0 0 28 24" className="w-7 h-6">
        <path d="M0 1 H9 L11 4 H28 V23 H0 Z" fill="#fbdc7c" />
        <path d="M5 12 H23 V23 H18 V18 H10 V23 H5 Z" fill="#42a9c9" />
      </svg>
    ),
  },
  {
    name: 'Store',
    icon: (
      <svg viewBox="0 0 28 30" className="w-7 h-[30px]">
        <path d="M6 9 Q8 1 12 1 Q17 1 18 7 M11 7 Q12 1 15 1" fill="none" stroke="#ddd" strokeWidth="2" />
        <path d="M1 9 L27 5 V29 L1 27 Z" fill="#fff" />
        <path d="M7 13 L11 12 V17 H7 Z M12 12 L18 11 V17 H12 Z M7 18 H11 V23 L7 22 Z M12 18 H18 V24 L12 23 Z" fill="#000" />
      </svg>
    ),
  },
  {
    name: 'Internet Explorer',
    icon: (
      <span className="relative">
        <FaInternetExplorer className="w-7 h-7 text-[#62cdf1]" />
        <svg viewBox="0 0 28 28" className="absolute inset-0 w-7 h-7">
          <path d="M5 27 Q-3 27 5 15 Q14 3 24 1 Q28 1 25 9" fill="none" stroke="#f0bd3c" strokeWidth="2" />
        </svg>
      </span>
    ),
  },
  {
    name: 'Skype',
    icon: (
      <svg viewBox="0 0 32 32" className="w-8 h-8">
        <circle cx="10" cy="10" r="9" fill="#8edcf5" />
        <circle cx="18" cy="18" r="9" fill="#8edcf5" />
        <circle cx="14" cy="14" r="12" fill="#d8f3fc" />
        <path d="M19 9 Q17 6 13 7 Q8 8 10 12 Q12 14 16 15 Q20 17 17 20 Q12 22 9 18" fill="none" stroke="#16a0d8" strokeWidth="3" />
        <circle cx="24" cy="24" r="7" fill="#6dac1f" />
        <path d="M21 24 L23 26 L27 22" fill="none" stroke="#fff" strokeWidth="2" />
      </svg>
    ),
  },
  { name: 'Outlook', icon: <OfficeIcon letter="O" color="#0a66bd" /> },
  {
    name: 'Shield',
    icon: (
      <svg viewBox="0 0 28 28" className="w-7 h-7">
        <path d="M14 1 Q20 4 27 4 Q28 20 14 27 Q0 20 1 4 Q8 4 14 1 Z" fill="#16899c" stroke="#b9cfc9" strokeWidth="2" />
        <path d="M6 18 Q10 12 17 13 L22 9 L15 10 L12 8" fill="none" stroke="#fff" strokeWidth="2" />
      </svg>
    ),
  },
  {
    name: 'Chrome',
    icon: (
      <svg viewBox="0 0 28 28" className="w-7 h-7">
        <path d="M14 14 L2 7 A14 14 0 0 1 26 7 Z" fill="#dd4b3e" />
        <path d="M14 14 L26 7 A14 14 0 0 1 14 28 Z" fill="#ffcd46" />
        <path d="M14 14 L14 28 A14 14 0 0 1 2 7 Z" fill="#1aa15f" />
        <path d="M14 8 H26 L20 18 L14 28 L19 17 Z" fill="#ffcd46" />
        <circle cx="14" cy="14" r="6" fill="#fff" />
        <circle cx="14" cy="14" r="5" fill="#4a80ea" />
      </svg>
    ),
  },
  {
    name: 'Calendar',
    icon: (
      <svg viewBox="0 0 26 30" className="w-[26px] h-[30px]">
        <path d="M1 4 H25 V29 H1 Z" fill="#000" stroke="#fff" strokeWidth="2" />
        <path d="M0 3 H26 V10 H0 Z M4 0 H7 V4 H4 Z M19 0 H22 V4 H19 Z" fill="#fff" />
        <path d="M10 15 H22 M5 20 H22 M5 25 H18" stroke="#fff" strokeWidth="3" strokeDasharray="3 1" />
      </svg>
    ),
  },
  {
    name: 'Notepad',
    icon: (
      <svg viewBox="0 0 28 28" className="w-7 h-7">
        <path d="M8 2 L23 3 L27 25 L20 27 Z" fill="#e5e5e0" />
        <path d="M8 2 L23 4 L18 26 L1 21 Z" fill="#6fb3b8" />
        <path d="M9 3 L22 4 L20 12 L6 9 Z" fill="#a9d1d1" />
      </svg>
    ),
  },
  { name: 'PowerPoint', icon: <OfficeIcon letter="P" color="#d04525" /> },
];

const Taskbar = () => (
  <footer className="h-[46px] bg-[#020305] text-[#e5e5e5] flex items-stretch pl-[2px]">
    {taskbarApps.map((app) => (
      <button
        key={app.name}
        aria-label={app.name}
        className={`w-[62px] flex items-center justify-center pt-1 ${app.name === 'Chrome' ? 'bg-[#38393b]' : ''}`}
      >
        {app.icon}
      </button>
    ))}
    <div className="ml-auto flex items-center pt-1 text-[15px] leading-6">
      <Chevron dir="up" width={3} className="w-[18px] h-[18px] mr-[22px]" />
      <svg viewBox="0 0 22 18" className="w-[22px] h-[18px] mr-[18px]" fill="none" stroke="#ddd" strokeWidth="2">
        <path d="M7 5 H20 V15 H7 Z" />
        <path d="M9 7 H18 V13 H9 Z" fill="#ddd" />
        <path d="M1 2 H6 V7 H1 Z M3 7 V14 H7" />
      </svg>
      <OneDrive color="#1277d8" />
      <span className="w-[18px]" />
      <OneDrive color="#f5f5f5" />
      <svg viewBox="0 0 20 20" className="w-5 h-5 ml-5" fill="none" stroke="#ddd" strokeWidth="2">
        <path d="M2 18 A17 17 0 0 1 18 2 M7 18 A12 12 0 0 1 18 7 M12 18 A7 7 0 0 1 18 12" />
        <circle cx="17" cy="17" r="2" fill="#ddd" stroke="none" />
      </svg>
      <svg viewBox="0 0 22 18" className="w-[22px] h-[18px] ml-[18px]" fill="none" stroke="#ddd" strokeWidth="2">
        <path d="M1 6 H4 L9 2 V16 L4 12 H1 Z M12 6 Q14 9 12 12" />
        <path d="M15 4 Q18 9 15 14 M18 2 Q23 9 18 16" stroke="#777" />
      </svg>
      <svg viewBox="0 0 22 24" className="w-[22px] h-6 ml-6" fill="none" stroke="#ddd" strokeWidth="2">
        <path d="M6 12 Q1 14 1 18 Q1 22 5 21 Q8 20 9 16 L15 3 Q18 0 19 4 L12 17 L8 20 M13 13 Q15 17 18 14 Q20 12 18 10" />
      </svg>
      <svg viewBox="0 0 30 20" className="w-[30px] h-5 ml-7" fill="none" stroke="#ddd" strokeWidth="2">
        <path d="M1 1 H29 V19 H1 Z" />
        <path d="M5 7 H25 M5 11 H25" strokeDasharray="2 2" />
        <path d="M5 15 H7 M9 15 H21 M23 15 H25" />
      </svg>
      <span className="ml-[22px] w-[24px]">FIN</span>
      <div className="ml-[18px] w-[68px] text-center whitespace-nowrap">
        <p>0.04</p>
        <p>30.3.2017</p>
      </div>
      <div className="relative ml-[19px] mr-[14px]">
        <svg viewBox="0 0 32 32" className="w-8 h-8">
          <path d="M2 3 H23 V22 H14 L8 27 V22 H2 Z" fill="#fff" />
          <path d="M5 8 H20 M5 12 H20 M5 16 H14" stroke="#222" strokeWidth="2" />
          <circle cx="22" cy="23" r="9" fill="#3f4042" stroke="#777" />
          <text x="22" y="28" textAnchor="middle" fontSize="14" fill="#fff">3</text>
        </svg>
      </div>
      <span className="w-px h-[46px] -mt-1 mr-1 bg-[#666]" />
    </div>
  </footer>
);

const App = () => {
  return (
    <div className="relative min-h-screen bg-white px-[155px] flex flex-col overflow-hidden [font-family:'Open_Sans','Noto_Sans',sans-serif]">
      <div className="absolute top-[42px] right-[49px] text-[62px] leading-[72px] font-black text-[#fcd916] [font-family:Roboto,sans-serif]">
        RISE
      </div>
      <div className="relative flex-1 flex flex-col bg-white">
        <BrowserChrome />
        <NavBar />
        <PageHeader />
        <main className="flex-1 grid grid-cols-[554fr_11px_829fr_14px_330fr]">
          <MapPanel />
          <SideHandle dir="left" />
          <section className="flex flex-col min-w-0">
            <BoardToolbar />
            <div className="flex-1 flex mt-[18px]">
              <ResourceList />
              <div className="w-[9px] shrink-0 bg-[#efeef0]" />
              <Timeline />
            </div>
            <BoardFooter />
            <div className="h-1" />
          </section>
          <SideHandle dir="right" />
          <DetailsPanel />
        </main>
        <div className="h-3 flex justify-center pl-1">
          <button aria-label="Open requirements" className="w-[67px] bg-[#dcdbdd] flex items-end justify-center">
            <Triangle dir="up" className="text-black" />
          </button>
        </div>
        <div className="h-[60px] bg-[#f1f0f2] flex items-center justify-between pl-[14px] pr-[14px]">
          <h2 className="text-lg text-[#333]">Varaustarpeet</h2>
          <button aria-label="Expand requirements"><Triangle dir="up" className="text-[#222]" /></button>
        </div>
        <Taskbar />
      </div>
    </div>
  );
};

export default App;
